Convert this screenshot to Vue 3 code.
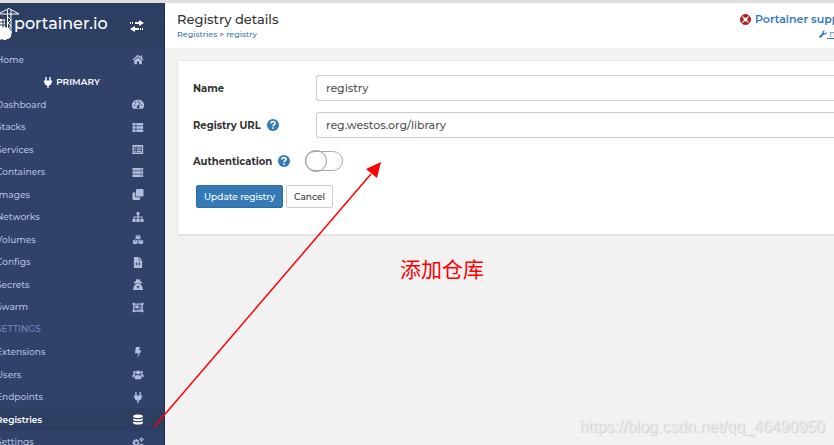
<script setup>
import { ref } from 'vue'

const name = ref('registry')
const url = ref('reg.westos.org/library')
const authentication = ref(false)

const menu = [
  { label: 'Home', icon: 'home' },
  { label: 'PRIMARY', icon: 'plug', type: 'endpoint' },
  { label: 'Dashboard', icon: 'dashboard' },
  { label: 'Stacks', icon: 'list' },
  { label: 'Services', icon: 'listAlt' },
  { label: 'Containers', icon: 'server' },
  { label: 'Images', icon: 'clone' },
  { label: 'Networks', icon: 'sitemap' },
  { label: 'Volumes', icon: 'cubes' },
  { label: 'Configs', icon: 'file' },
  { label: 'Secrets', icon: 'secret' },
  { label: 'Swarm', icon: 'group' },
  { label: 'SETTINGS', type: 'title' },
  { label: 'Extensions', icon: 'bolt' },
  { label: 'Users', icon: 'users' },
  { label: 'Endpoints', icon: 'plug' },
  { label: 'Registries', icon: 'database', active: true },
  { label: 'Settings', icon: 'cogs' }
]

const icons = {
  home: 'M8 1 0 8l1 1.500 7-6 7 6L16 8l-2-2V2h-2v2.500zM8 5 2.500 9.500V15H6.500V11h3v4h4V9.500z',
  plug: 'M4 0h2v5h4V0h2v5h2v3h-1c0 3-1.500 4-4 4.500V16H7v-3.500c-2.500-.5-4-1.500-4-4.500H2V5h2z',
  dashboard: 'M8 1a8 8 0 0 0-7 13h14A8 8 0 0 0 8 1zM8 2.500a1 1 0 1 1 0 2 1 1 0 0 1 0-2zM3 8a1 1 0 1 1 0 2 1 1 0 0 1 0-2zM4.500 4a1 1 0 1 1 0 2 1 1 0 0 1 0-2zM13 8a1 1 0 1 1 0 2 1 1 0 0 1 0-2zM10.500 4.500l1 .4L9.500 10a2 2 0 1 1-1.200-.4z',
  list: 'M0 1.500h4.500v3.500H0zM5.500 1.500h10v3.500h-10zM0 6.300h4.500v3.500H0zM5.500 6.300h10v3.500h-10zM0 11h4.500v3.500H0zM5.500 11h10v3.500h-10z',
  listAlt: 'M0 1.500h15.500V14.500H0zM2 4v8.500h11.500V4zM3 5h2v1.500H3zM6 5h6.500v1.500H6zM3 7.500h2V9H3zM6 7.500h6.500V9H6zM3 10h2v1.500H3zM6 10h6.500v1.500H6z',
  server: 'M0 1.500h15.500v3.500H0zM11 3v1h1V3zM13 3v1h1V3zM0 6.300h15.500v3.500H0zM11 7.500v1h1v-1zM13 7.500v1h1v-1zM0 11h15.500v3.500H0zM11 12.500v1h1v-1zM13 12.500v1h1v-1z',
  clone: 'M6 0h9l1 1v9l-1 1H6l-1-1V1zM1 5h3v7h7V15l-1 1H1l-1-1V6z',
  sitemap: 'M6 0h4v4.500H9v2h5.500V10H16v4.500h-4.500V10H13V8H9v2h1.500v4.500h-5V10H7V8H3v2h1.500v4.500H0V10h1.500V6.500H7v-2H6z',
  cubes: 'M8 1l3.500 1.500v4L8 8 4.500 6.500v-4zM8 2.300 6 3l2 1 2-1zM4 8l3.500 1.500v4L4 15 .5 13.500v-4zM4 9.300 2 10l2 1 2-1zM12 8l3.500 1.500v4L12 15l-3.500-1.500v-4zM12 9.300 10 10l2 1 2-1z',
  file: 'M2 0h7v5h5v11H2zM10 0l4 4h-4zM6.500 7.500 4 10l2.500 2.500 1-1L6 10l1.500-1.500zM9.500 7.500l-1 1L10 10l-1.500 1.500 1 1L12 10z',
  secret: 'M5.500 0 8 1 10.500 0l1 4H14v2h-2c0 1.500-.5 2.500-1 3h2.500l2 7H.5l2-7H5c-.5-.5-1-1.500-1-3H2V4h2.500zM5 6v1h2.500V6zM8.500 6v1H11V6zM6 10l1 4 1-3 1 3 1-4z',
  group: 'M0 1h3v1h10V1h3v3h-1v8h1v3h-3v-1H3v1H0v-3h1V4H0zM3 4v8h10V4zM4 5h5v1.500h3V11H7V9H4zM8 8v2h3V7.500H9V8z',
  bolt: 'M5 0h6L9.500 5H13L7 16l1.500-7H3.500z',
  users: 'M8 2a3 3 0 1 1 0 6 3 3 0 0 1 0-6zM2.800 3a2 2 0 1 1 0 4 2 2 0 0 1 0-4zM13.200 3a2 2 0 1 1 0 4 2 2 0 0 1 0-4zM3.500 15v-4l2-2h5l2 2v4zM0 12V8.500l1-1h3l.5.500L2.500 12zM16 12V8.500l-1-1h-3l-.5.500 2 4z',
  database: 'M1 3c0-3 14-3 14 0v1c0 2.500-14 2.500-14 0zM1 6c2 2 12 2 14 0v2.500c0 2.500-14 2.500-14 0zM1 10.500c2 2 12 2 14 0V13c0 3-14 3-14 0z',
  cogs: 'M4.500 3h2l.4 1.700 1.500-.7 1 1.500-1 1.200 1.600.8v2l-1.600.6.8 1.500-1.500 1.300-1.200-.8-.5 1.900h-2l-.5-1.700-1.500.7-1.200-1.500.9-1.300L0 9.500v-2l1.700-.5L1 5.500 2.500 4 4 5zM5.500 6.500a2 2 0 1 0 0 4 2 2 0 0 0 0-4zM12 1h2l.3 1.200H16v2l-1.300.8L14 6.500h-2L11.500 5 10 4.500v-2l1.500-.5zM13 2.800a1 1 0 1 0 0 2 1 1 0 0 0 0-2zM12 9.500h2l.3 1.200H16v2l-1.300.8L14 15h-2l-.5-1.500L10 13v-2l1.500-.5zM13 11.300a1 1 0 1 0 0 2 1 1 0 0 0 0-2z'
}
</script>

<template>
  <div class="page">
    <div class="layout">
      <aside class="sidebar">
        <div class="brand">
          <svg class="logo" viewBox="0 0 22 38" aria-hidden="true">
            <path d="M0 7h19M7.500 3v20M11 3v24M0 6l9-4.500L19 7M8 10l3 3-3 3 3 3-3 3 3 3" fill="none" stroke="#fff" stroke-width="1" />
            <path d="M0 12h5v10H0z" fill="#fff" />
            <path d="M0 15h6M0 18h6M3 12v10" stroke="#2d3e63" stroke-width="1" />
            <path d="M0 22c1-2 3-2 4-1 3-2 6 0 6 2 2 1 2 3 1 4 1 3-2 5-4 5-2 2-4 1-5 0l-2 1z" fill="#fff" />
          </svg>
          <span class="brand-name">portainer.io</span>
          <button class="toggle" type="button" aria-label="Toggle sidebar">
            <svg viewBox="0 0 14 12">
              <path d="M5 2h4V0l5 3-5 3V4H5zM0 2h1v2H0zM2 2h1v2H2zM9 8H5V6L0 9l5 3v-2h4zM10 8h1v2h-1zM12 8h1v2h-1z" fill="currentColor" />
            </svg>
          </button>
        </div>
        <ul class="menu">
          <li v-for="(item, index) in menu" :key="index" :class="[item.type, { active: item.active }]">
            <span v-if="item.type == 'title'">{{ item.label }}</span>
            <a v-else href="#">
              <span class="label">{{ item.label }}</span>
              <svg class="icon" viewBox="0 0 16 16" aria-hidden="true">
                <path :d="icons[item.icon]" fill="currentColor" fill-rule="evenodd" />
              </svg>
            </a>
          </li>
        </ul>
      </aside>

      <main class="content">
        <header class="header">
          <div>
            <h1>Registry details</h1>
            <p class="breadcrumb"><a href="#">Registries</a> &gt; <a href="#">registry</a></p>
          </div>
          <div class="support">
            <a class="support-link" href="#">
              <svg viewBox="0 0 12 12" aria-hidden="true">
                <circle cx="6" cy="6" r="4" fill="none" stroke="#b01e1e" stroke-width="3.500" />
                <path d="M2 2l2.500 2.500M10 2 7.500 4.500M2 10l2.500-2.500M10 10 7.500 7.500" stroke="#fff" stroke-width="1.300" />
                <circle cx="6" cy="6" r="5.300" fill="none" stroke="#b01e1e" stroke-width="1" />
              </svg>
              <span>Portainer support</span>
            </a>
            <a class="account-link" href="#">
              <svg viewBox="0 0 16 16" aria-hidden="true">
                <path d="M15.500 4 12.500 6.500 10 6 9.500 3.500 12 .5C9 0 6 2.500 7 6L.5 12.500c-1 2 1 4 3 3L10 9c3 1 6-1.500 5.500-5z" fill="currentColor" />
              </svg>
              <u>&nbsp;my account</u>
            </a>
          </div>
        </header>

        <section class="card">
          <form @submit.prevent>
            <div class="row">
              <label for="name">Name</label>
              <input id="name" class="field" type="text" v-model="name">
            </div>
            <div class="row">
              <div class="caption">
                <label for="url">Registry URL</label>
                <svg class="help" viewBox="0 0 12 12" aria-hidden="true">
                  <circle cx="6" cy="6" r="6" fill="currentColor" />
                  <path d="M4 4.500C4 2 8 2 8 4.500 8 6 6 5.800 6 7.200M6 8.200V9.800" fill="none" stroke="#fff" stroke-width="1.600" />
                </svg>
              </div>
              <input id="url" class="field" type="text" v-model="url">
            </div>
            <div class="auth">
              <label for="auth">Authentication</label>
              <svg class="help" viewBox="0 0 12 12" aria-hidden="true">
                <circle cx="6" cy="6" r="6" fill="currentColor" />
                <path d="M4 4.500C4 2 8 2 8 4.500 8 6 6 5.800 6 7.200M6 8.200V9.800" fill="none" stroke="#fff" stroke-width="1.600" />
              </svg>
              <input id="auth" class="switch" type="checkbox" v-model="authentication">
            </div>
            <div class="actions">
              <button class="btn primary" type="submit">Update registry</button>
              <button class="btn" type="button">Cancel</button>
            </div>
          </form>
        </section>
      </main>
    </div>

    <svg class="arrow" width="400" height="445" viewBox="0 0 400 445" aria-hidden="true">
      <path d="M154 427 371 174" stroke="#f00" stroke-width="1.500" />
      <path d="M381 162 377 178 366 169z" fill="#f00" />
    </svg>
    <p class="note">添加仓库</p>
    <p class="watermark">https://blog.csdn.net/qq_46490950</p>
  </div>
</template>

<style>
body {
  margin: 0;
  background: #f2f2f2;
}
</style>

<style scoped>
* {
  box-sizing: border-box;
}
.page {
  position: relative;
  height: 100vh;
  overflow: hidden;
  border-top: 3px solid #dededc;
  font-family: Montserrat, Inter, sans-serif;
  font-size: 11px;
  color: #333;
}
.layout {
  display: flex;
  height: 100%;
}
a {
  color: #337ab7;
  text-decoration: none;
}
h1,
p {
  margin: 0;
}

.sidebar {
  flex: none;
  width: 165px;
  overflow: hidden;
  background: #30426a;
  border-right: 1px solid #1c2c55;
}
.brand {
  display: flex;
  align-items: center;
  height: 45px;
  padding-right: 20px;
  background: #2d3e63;
  color: #fff;
}
.logo {
  flex: none;
  width: 22px;
  height: 38px;
  margin-right: -8px;
}
.brand-name {
  font-size: 16px;
  font-weight: 500;
  line-height: 38px;
  margin-bottom: 4px;
}
.toggle {
  display: flex;
  margin-left: auto;
  padding: 0;
  border: 0;
  background: none;
  color: #fff;
}
.toggle svg {
  width: 14px;
  height: 12px;
}
.menu {
  margin: 0;
  padding: 0;
  list-style: none;
  font-size: 9px;
  font-weight: 500;
}
.menu li {
  height: 22px;
  line-height: 22px;
  color: #6f86c4;
}
.menu li:nth-child(odd) {
  height: 23px;
}
.menu a {
  display: flex;
  align-items: center;
  height: 100%;
  padding-right: 20px;
  color: #b2bfdc;
}
.label {
  flex: 1;
}
.menu span {
  margin-left: -4px;
}
.icon {
  flex: none;
  width: 12px;
  height: 11px;
}
.endpoint a {
  flex-direction: row-reverse;
  justify-content: center;
  gap: 2px;
  padding-right: 22px;
  color: #fff;
}
.menu .endpoint .label {
  flex: none;
  margin: 0;
}
.endpoint .label,
.active .label {
  font-weight: 600;
}
.menu .active {
  background: #2d3e63;
}
.active a {
  color: #fff;
}

.content {
  flex: 1;
  min-width: 0;
}
.header {
  display: flex;
  justify-content: space-between;
  height: 45px;
  padding: 7px 0 0 12px;
  background: #fff;
}
h1 {
  font-size: 13px;
  font-weight: 500;
  line-height: 18px;
}
.breadcrumb {
  font-size: 8px;
  font-weight: 500;
  line-height: 12px;
}
.support {
  width: 94px;
  overflow: hidden;
  white-space: nowrap;
}
.support-link {
  display: flex;
  align-items: center;
  gap: 4px;
  font-weight: 600;
  line-height: 18px;
}
.support-link svg {
  flex: none;
  width: 11px;
  height: 11px;
}
.account-link {
  display: flex;
  align-items: center;
  padding-left: 79px;
  font-size: 9px;
  line-height: 12px;
}
.account-link svg {
  flex: none;
  width: 8px;
  height: 8px;
}

.card {
  margin: 12px 0 0 12px;
  padding: 14px 0 26px 15px;
  border: 1px solid #e7e7e7;
  border-right: 0;
  border-bottom: 2px solid #e4e4e4;
  border-radius: 2px 0 0 2px;
  background: #fff;
}
.row {
  display: grid;
  grid-template-columns: 123px 1fr;
  align-items: center;
  margin-bottom: 11px;
}
.caption,
.auth {
  display: flex;
  align-items: center;
  gap: 6px;
}
.auth {
  margin-top: 13px;
}
label {
  font-size: 10px;
  font-weight: 700;
}
.help {
  width: 12px;
  height: 12px;
  color: #337ab7;
}
.field {
  width: 100%;
  height: 26px;
  padding: 0 9px;
  border: 1px solid #ccc;
  border-right: 0;
  border-radius: 3px 0 0 3px;
  background: #fff;
  color: #555;
  font-family: inherit;
  font-size: 11px;
  font-weight: 500;
}
.switch {
  appearance: none;
  display: flex;
  align-items: center;
  width: 38px;
  height: 20px;
  margin: 0 0 0 9px;
  border: 1px solid #aaa;
  border-radius: 10px;
  background: #fff;
}
.switch::before {
  content: '';
  width: 20px;
  height: 20px;
  margin-left: -1px;
  border: 1px solid #999;
  border-radius: 50%;
}
.switch:checked {
  justify-content: flex-end;
  background: #337ab7;
}
.actions {
  display: flex;
  gap: 3px;
  margin: 14px 0 0 3px;
}
.btn {
  height: 23px;
  padding: 0 7px;
  border: 1px solid #ccc;
  border-radius: 2px;
  background: #fff;
  color: #333;
  font-family: inherit;
  font-size: 9px;
  font-weight: 500;
}
.primary {
  border-color: #2e6da4;
  background: #337ab7;
  color: #fff;
}

/* annotations lie over the page */
.arrow {
  position: absolute;
  top: -3px;
  left: 0;
  pointer-events: none;
}
.note {
  position: absolute;
  top: 250px;
  left: 400px;
  font-family: "Noto Sans CJK SC", sans-serif;
  font-size: 21px;
  line-height: 30px;
  color: #f00;
}
.watermark {
  position: absolute;
  right: 9px;
  bottom: 8px;
  font-family: "Liberation Sans", sans-serif;
  font-size: 16px;
  line-height: 20px;
  color: #e9e9e9;
  text-shadow: 1px 1px 0 #d4d4d4;
}
</style>
